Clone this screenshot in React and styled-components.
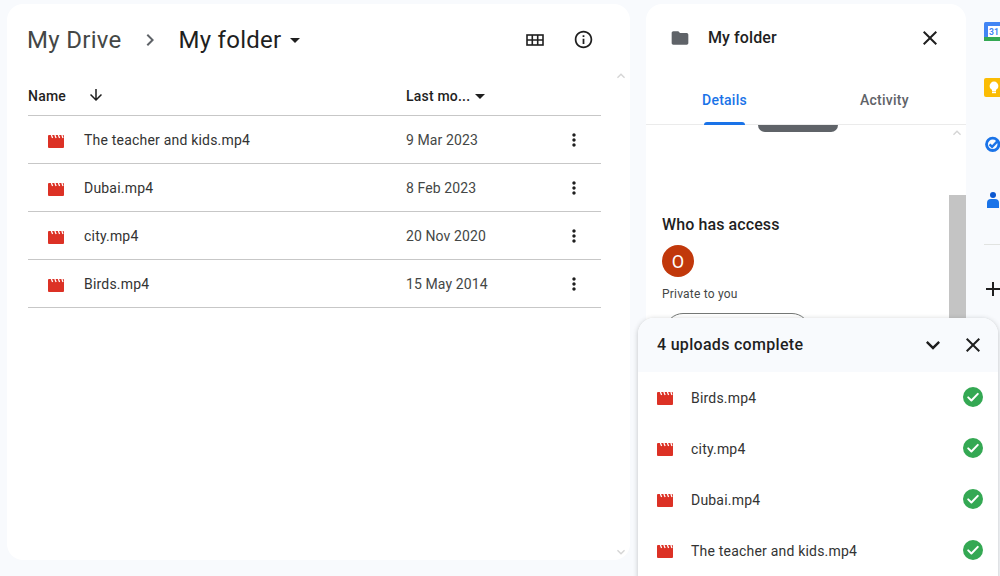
import React from 'react';
import styled, { createGlobalStyle } from 'styled-components';
import {
  MdAdd,
  MdArrowDownward,
  MdArrowDropDown,
  MdChevronRight,
  MdClose,
  MdFolder,
  MdInfoOutline,
  MdKeyboardArrowDown,
  MdKeyboardArrowUp,
  MdMoreVert,
} from 'react-icons/md';

const GlobalStyle = createGlobalStyle`
  html, body {
    margin: 0;
    padding: 0;
    background: #f8fafd;
  }
  * {
    box-sizing: border-box;
  }
`;

const uiStack = `Roboto, 'Liberation Sans', sans-serif`;

const Page = styled.div`
  position: relative;
  width: 1000px;
  height: 576px;
  overflow: hidden;
  display: flex;
  align-items: flex-start;
  padding: 4px 0 0 7px;
  background: #f8fafd;
  font-family: ${uiStack};
  color: #1f1f1f;
`;

const MainPanel = styled.main`
  position: relative;
  width: 623px;
  height: 556px;
  flex-shrink: 0;
  padding: 0 29px 0 21px;
  background: #fff;
  border-radius: 16px;
`;

const GutterArrow = styled.div`
  position: absolute;
  color: #d5d5d5;
  display: flex;
  right: ${(p) => p.$right}px;
  ${(p) => (p.$bottom !== undefined ? `bottom: ${p.$bottom}px;` : `top: ${p.$top}px;`)}
`;

const Toolbar = styled.div`
  height: 73px;
  display: flex;
  align-items: center;
  padding-bottom: 2px;
`;

const Crumb = styled.span`
  font-size: 24px;
  line-height: 32px;
  margin-left: ${(p) => (p.$current ? 0 : '-1px')};
  letter-spacing: ${(p) => (p.$current ? '0.25px' : '0.3px')};
  color: ${(p) => (p.$current ? '#1f1f1f' : '#444746')};
`;

const CrumbChevron = styled.span`
  display: flex;
  margin: 0 17px 0 16px;
  color: #5f6368;
`;

const CaretWrap = styled.span`
  display: flex;
  margin-left: 2px;
  color: #1f1f1f;
`;

const ToolIcons = styled.div`
  margin-left: auto;
  display: flex;
  align-items: center;
  gap: 29px;
  margin-right: 7px;
  color: #1f1f1f;
`;

const ColumnHeader = styled.div`
  height: 39px;
  display: flex;
  align-items: center;
  font-size: 14px;
  font-weight: 500;
  border-bottom: 1px solid #c7c7c7;
  letter-spacing: 0.2px;
  padding-bottom: 1px;
`;

const NameHeading = styled.div`
  width: 378px;
  display: flex;
  align-items: center;
  gap: 21px;

  svg {
    margin-top: -2px;
  }
`;

const DateHeading = styled.div`
  display: flex;
  align-items: center;

  svg {
    margin-left: -2px;
  }
`;

const FileRow = styled.div`
  height: 48px;
  display: flex;
  align-items: center;
  border-bottom: 1px solid #c7c7c7;
  font-size: 14px;
  letter-spacing: 0.2px;
`;

const FileName = styled.div`
  width: 378px;
  display: flex;
  align-items: center;
  padding-left: 20px;
  gap: 20px;
  color: #333;
`;

const FileDate = styled.div`
  width: 158px;
  letter-spacing: 0.1px;
  color: #444746;
`;

const Kebab = styled.span`
  display: flex;
  color: #1f1f1f;
`;

const DetailPanel = styled.aside`
  position: relative;
  margin-left: 16px;
  width: 320px;
  height: 572px;
  flex-shrink: 0;
  background: #fff;
  border-radius: 16px 16px 0 0;
  overflow: hidden;
`;

const DetailHead = styled.div`
  height: 67px;
  display: flex;
  align-items: center;
  padding: 0 24px;
`;

const DetailTitle = styled.div`
  margin-left: 18px;
  font-size: 16px;
  font-weight: 500;
  letter-spacing: 0.1px;
  flex: 1;
`;

const Tabs = styled.div`
  height: 54px;
  display: flex;
  padding-left: 56px;
  border-bottom: 1px solid #ebebeb;
`;

const Tab = styled.div`
  position: relative;
  flex: 0 0 auto;
  width: 160px;
  height: 54px;
  margin-left: ${(p) => (p.$shift ? `${p.$shift}px` : 0)};
  padding-top: 21px;
  font-size: 14px;
  font-weight: 500;
  letter-spacing: 0.25px;
  color: ${(p) => (p.$active ? '#1a73e8' : '#5f6368')};
`;

const TabMark = styled.span`
  position: absolute;
  left: 2px;
  bottom: 0;
  width: 41px;
  height: 3px;
  border-radius: 3px 3px 0 0;
  background: #1a73e8;
`;

const ScrollStub = styled.div`
  width: 80px;
  height: 7px;
  margin-left: 112px;
  border-radius: 0 0 8px 8px;
  background: #5f6368;
`;

const ScrollThumb = styled.div`
  position: absolute;
  right: 0;
  top: 191px;
  width: 17px;
  height: 140px;
  background: #c4c4c4;
`;

const AccessSection = styled.section`
  padding: 82px 0 0 16px;
`;

const AccessTitle = styled.h3`
  margin: 0;
  font-size: 16px;
  line-height: 22px;
  font-weight: 500;
  letter-spacing: 0.1px;
  color: #1f1f1f;
`;

const Avatar = styled.div`
  width: 32px;
  height: 32px;
  margin-top: 9px;
  display: flex;
  align-items: center;
  justify-content: center;
  border-radius: 50%;
  background: #c1380b;
  color: #fff;
  font-size: 18px;
`;

const PrivateNote = styled.div`
  margin-top: 9px;
  font-size: 12px;
  line-height: 16px;
  letter-spacing: 0.2px;
  color: #444746;
`;

const ManageButton = styled.div`
  width: 145px;
  height: 36px;
  margin: 11px 0 0 3px;
  border: 1px solid #747775;
  border-radius: 18px;
`;

const Rail = styled.nav`
  margin-left: 18px;
  width: 34px;
  flex-shrink: 0;
  display: flex;
  flex-direction: column;
  padding-top: 18px;
`;

const RailSlot = styled.div`
  height: 56px;
  width: 20px;
  display: flex;
`;

const RailDivider = styled.div`
  height: 1px;
  width: 30px;
  margin-top: -2px;
  background: #e1e3e1;
`;

const RailAdd = styled.div`
  margin: 32px 0 0 -3px;
  display: flex;
  color: #1f1f1f;
`;

const UploadPanel = styled.section`
  position: absolute;
  left: 638px;
  top: 318px;
  width: 360px;
  height: 270px;
  background: #fff;
  border-radius: 16px 16px 0 0;
  box-shadow: 0 1px 5px rgba(60, 64, 67, 0.3);
  overflow: hidden;
`;

const UploadHead = styled.header`
  height: 54px;
  display: flex;
  align-items: center;
  padding: 0 13px 0 19px;
  background: #f8fafd;
  color: #1f1f1f;
`;

const UploadTitle = styled.div`
  flex: 1;
  padding-bottom: 2px;
  font-size: 16px;
  font-weight: 500;
  letter-spacing: 0.3px;
`;

const UploadActions = styled.div`
  display: flex;
  align-items: center;
  gap: 14px;
`;

const UploadRow = styled.div`
  height: 51px;
  display: flex;
  align-items: center;
  padding: 0 15px 0 19px;
  font-size: 14px;
  letter-spacing: 0.2px;
  color: #333;
`;

const UploadName = styled.div`
  flex: 1;
  margin-left: 18px;
`;

const IconBox = styled.span`
  display: flex;
`;

const VideoGlyph = styled.span`
  display: flex;
  margin-top: ${(p) => p.$drop}px;
`;

const CheckBadge = styled.span`
  display: flex;
  margin-bottom: 2px;
`;

const VideoIcon = ({ drop }) => (
  <VideoGlyph $drop={drop}>
    <svg width="16" height="13" viewBox="0 0 16 13">
      <path
        d="M1 0h14a1 1 0 0 1 1 1v11a1 1 0 0 1-1 1H1a1 1 0 0 1-1-1V1a1 1 0 0 1 1-1z"
        fill="#dc3125"
      />
      <path
        d="M3.4 0l1.2 3M6.9 0l1.2 3M10.4 0l1.2 3M13.9 0L15 3"
        stroke="#fff"
        strokeWidth="1.3"
      />
    </svg>
  </VideoGlyph>
);

const GridIcon = () => (
  <svg width="18" height="14" viewBox="0 0 18 14" fill="none" stroke="#1f1f1f">
    <rect x="1" y="2" width="16" height="10" strokeWidth="1.6" />
    <path d="M1 7h16M6.3 2v10M11.7 2v10" strokeWidth="1.6" />
  </svg>
);

const CheckIcon = () => (
  <CheckBadge>
    <svg width="20" height="20" viewBox="0 0 20 20">
      <circle cx="10" cy="10" r="10" fill="#34a853" />
      <path
        d="M5.2 10.4l3.2 3.1 6.4-6.6"
        fill="none"
        stroke="#fff"
        strokeWidth="2"
        strokeLinecap="round"
        strokeLinejoin="round"
      />
    </svg>
  </CheckBadge>
);

const CalendarIcon = () => (
  <svg width="20" height="20" viewBox="0 0 20 20">
    <rect width="20" height="19" rx="1.5" fill="#4285f4" />
    <rect x="4" y="4" width="12" height="11" fill="#fff" />
    <rect y="15" width="16" height="4" fill="#34a853" />
    <rect x="16" y="15" width="4" height="4" fill="#ea4335" />
    <text
      x="10"
      y="13"
      textAnchor="middle"
      fontSize="8.5"
      fontWeight="700"
      fontFamily="Roboto, sans-serif"
      fill="#4285f4"
    >
      31
    </text>
  </svg>
);

const KeepIcon = () => (
  <svg width="20" height="20" viewBox="0 0 20 20">
    <rect width="20" height="19" rx="2" fill="#fbbc04" />
    <circle cx="10" cy="8" r="4.4" fill="#fff" />
    <rect x="8" y="11" width="4" height="2.5" fill="#fff" />
    <rect x="8" y="14" width="4" height="1.2" fill="#fff" />
  </svg>
);

const TasksIcon = () => (
  <svg width="20" height="20" viewBox="0 0 20 20">
    <circle cx="8.7" cy="10.3" r="6.2" fill="none" stroke="#1a73e8" strokeWidth="2.8" />
    <path d="M5.6 10.3l2.5 2.5L14 6.6" fill="none" stroke="#1a73e8" strokeWidth="2.4" />
  </svg>
);

const ContactsIcon = () => (
  <svg width="20" height="20" viewBox="0 0 20 20">
    <circle cx="9" cy="5" r="3" fill="#0b57d0" />
    <path d="M3 18v-5a4 4 0 0 1 4-4h4a4 4 0 0 1 4 4v5z" fill="#1a73e8" />
  </svg>
);

const files = [
  { name: 'The teacher and kids.mp4', date: '9 Mar 2023' },
  { name: 'Dubai.mp4', date: '8 Feb 2023' },
  { name: 'city.mp4', date: '20 Nov 2020' },
  { name: 'Birds.mp4', date: '15 May 2014' },
];

const uploads = ['Birds.mp4', 'city.mp4', 'Dubai.mp4', 'The teacher and kids.mp4'];

const App = () => {
  return (
    <>
      <GlobalStyle />
      <Page>
        <MainPanel>
          <Toolbar>
            <Crumb>My Drive</Crumb>
            <CrumbChevron>
              <MdChevronRight size={24} />
            </CrumbChevron>
            <Crumb $current>My folder</Crumb>
            <CaretWrap>
              <MdArrowDropDown size={24} />
            </CaretWrap>
            <ToolIcons>
              <GridIcon />
              <MdInfoOutline size={21} />
            </ToolIcons>
          </Toolbar>
          <ColumnHeader>
            <NameHeading>
              Name
              <MdArrowDownward size={18} />
            </NameHeading>
            <DateHeading>
              Last mo...
              <MdArrowDropDown size={24} />
            </DateHeading>
          </ColumnHeader>
          {files.map((file) => (
            <FileRow key={file.name}>
              <FileName>
                <VideoIcon drop={3} />
                {file.name}
              </FileName>
              <FileDate>{file.date}</FileDate>
              <Kebab>
                <MdMoreVert size={20} />
              </Kebab>
            </FileRow>
          ))}
          <GutterArrow $right={1} $top={64}>
            <MdKeyboardArrowUp size={16} />
          </GutterArrow>
          <GutterArrow $right={1} $bottom={0}>
            <MdKeyboardArrowDown size={16} />
          </GutterArrow>
        </MainPanel>

        <DetailPanel>
          <DetailHead>
            <IconBox>
              <MdFolder size={20} color="#5f6368" />
            </IconBox>
            <DetailTitle>My folder</DetailTitle>
            <MdClose size={24} />
          </DetailHead>
          <Tabs>
            <Tab $active>
              Details
              <TabMark />
            </Tab>
            <Tab $shift={-2}>Activity</Tab>
          </Tabs>
          <ScrollStub />
          <AccessSection>
            <AccessTitle>Who has access</AccessTitle>
            <Avatar>O</Avatar>
            <PrivateNote>Private to you</PrivateNote>
            <ManageButton />
          </AccessSection>
          <ScrollThumb />
          <GutterArrow $right={1} $top={121}>
            <MdKeyboardArrowUp size={16} />
          </GutterArrow>
        </DetailPanel>

        <Rail>
          <RailSlot>
            <CalendarIcon />
          </RailSlot>
          <RailSlot>
            <KeepIcon />
          </RailSlot>
          <RailSlot>
            <TasksIcon />
          </RailSlot>
          <RailSlot>
            <ContactsIcon />
          </RailSlot>
          <RailDivider />
          <RailAdd>
            <MdAdd size={24} />
          </RailAdd>
        </Rail>

        <UploadPanel>
          <UploadHead>
            <UploadTitle>4 uploads complete</UploadTitle>
            <UploadActions>
              <MdKeyboardArrowDown size={28} />
              <MdClose size={24} />
            </UploadActions>
          </UploadHead>
          {uploads.map((name) => (
            <UploadRow key={name}>
              <VideoIcon drop={1} />
              <UploadName>{name}</UploadName>
              <CheckIcon />
            </UploadRow>
          ))}
        </UploadPanel>
      </Page>
    </>
  );
};

export default App;
